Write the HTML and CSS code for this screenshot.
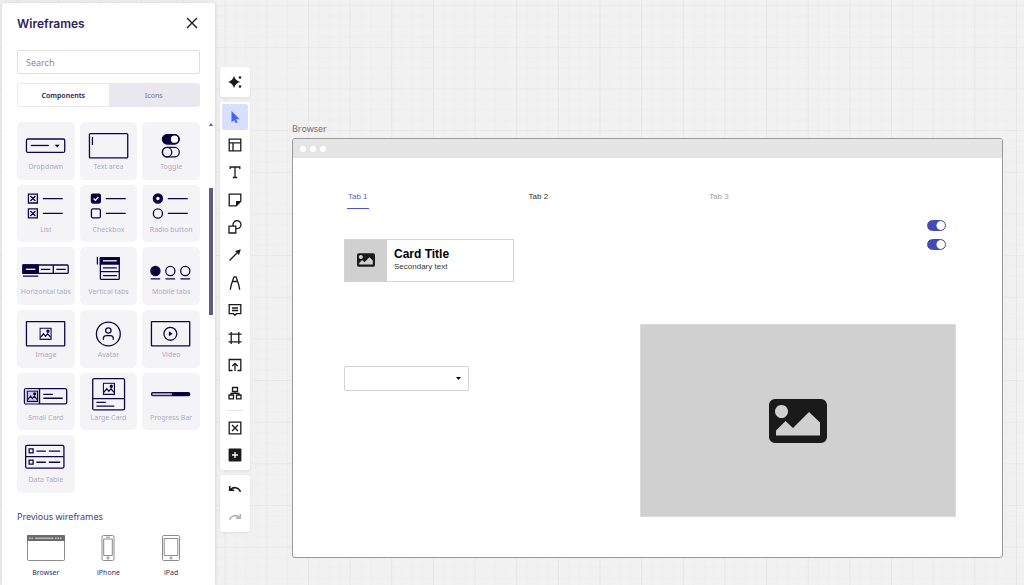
FILE: index.html
```html
<!DOCTYPE html>
<html lang="en">
<head>
<meta charset="utf-8">
<title>Wireframes</title>
<link rel="stylesheet" href="styles.css">
</head>
<body class="board">
<svg class="grid" aria-hidden="true">
  <defs>
    <pattern id="cell" x="16.4" y="5.2" width="41.65" height="41.65" patternUnits="userSpaceOnUse">
      <path class="grid-minor" d="M10.9 0v42M21.3 0v42M31.7 0v42M0 10.9h42M0 21.3h42M0 31.7h42"/>
      <path class="grid-major" d="M.5 0v42M0 .5h42"/>
    </pattern>
    <symbol id="photo" viewBox="0 0 58 44">
      <path fill-rule="evenodd" d="M6 0h46a6 6 0 0 1 6 6v32a6 6 0 0 1-6 6H6a6 6 0 0 1-6-6V6a6 6 0 0 1 6-6ZM12.500 6a6.500 6.500 0 1 0 .01 0ZM7 36.500h44V23.500L40 13 24 29l-7.500-7L7 31.500Z"/>
    </symbol>
    <symbol id="pic" viewBox="0 0 12 12">
      <rect x=".6" y=".6" width="10.800" height="10.800" fill="none" stroke="currentColor" stroke-width="1.200"/>
      <path d="M1 9.500 4 6l2 2.500L8 6l3 3.500" fill="none" stroke="currentColor" stroke-width="1.200"/>
      <circle cx="8.300" cy="3.500" r="1" fill="currentColor"/>
    </symbol>
  </defs>
  <rect width="100%" height="100%" fill="url(#cell)"/>
</svg>

<aside class="panel">
  <header class="panel-head">
    <h1 class="panel-title">Wireframes</h1>
    <button class="close" aria-label="Close"><svg viewBox="0 0 12 12"><path d="M1 1l10 10M11 1 1 11"/></svg></button>
  </header>
  <input class="search" type="text" placeholder="Search" aria-label="Search">
  <div class="switch">
    <button class="switch-item switch-on">Components</button>
    <button class="switch-item">Icons</button>
  </div>
  <div class="library">
    <div class="library-body">
      <div class="tiles">
        <button class="tile"><svg viewBox="0 0 58 40"><rect x="9.500" y="17" width="38.500" height="13.500" rx="1.500"/><path d="M14 23.500h18"/><path class="solid" d="M38 22.700h5l-2.500 2.800Z"/></svg><span>Dropdown</span></button>
        <button class="tile"><svg viewBox="0 0 58 40"><rect x="9.500" y="11.500" width="38.500" height="24.500" rx="1"/><path d="M12.500 15v8"/></svg><span>Text area</span></button>
        <button class="tile"><svg viewBox="0 0 58 40"><rect class="fill" x="20.500" y="12.500" width="17" height="9.500" rx="4.750"/><circle class="paper" cx="32.700" cy="17.200" r="4.300"/><rect x="20.500" y="25.500" width="17" height="9.500" rx="4.750"/><circle cx="25.200" cy="30.200" r="4.700"/></svg><span>Toggle</span></button>

        <button class="tile"><svg viewBox="0 0 58 40"><path d="M11.500 9h9v9h-9ZM13.500 11l5 5M18.500 11l-5 5M11.500 24h9v9h-9ZM13.500 26l5 5M18.500 26l-5 5M26 13.500h20M26 28.500h20"/></svg><span>List</span></button>
        <button class="tile"><svg viewBox="0 0 58 40"><rect class="fill" x="11.500" y="9" width="9" height="9" rx="1.500"/><path class="light" d="M13.700 13.500l1.800 1.800 3-3.300"/><rect x="11.500" y="24" width="9" height="9" rx="1.500"/><path d="M26 13.500h20M26 28.500h20"/></svg><span>Checkbox</span></button>
        <button class="tile"><svg viewBox="0 0 58 40"><circle class="fill" cx="16" cy="13.500" r="4.600"/><circle cx="16" cy="13.500" r="1.700" fill="#fff" stroke="none"/><circle cx="16" cy="28.500" r="4.600"/><path d="M26 13.500h20M26 28.500h20"/></svg><span>Radio button</span></button>

        <button class="tile"><svg viewBox="0 0 58 40"><rect x="6" y="18" width="45.500" height="8.500" rx="1"/><path class="fill" d="M6 18h15.500v8.500H6Z"/><path d="M36.500 18v8.500M24 22.300h9.500M39.500 22.300h9.500M6 29.200h15.500"/><path class="light" d="M9 22.300h9.500"/></svg><span>Horizontal tabs</span></button>
        <button class="tile"><svg viewBox="0 0 58 40"><rect x="20.500" y="10.500" width="19" height="22" rx="1"/><path class="fill" d="M20.500 10.500h19V17h-19Z"/><path d="M20.500 24.700h19M23 20.900h14M23 28.600h14M17.500 10v7.500"/><path class="light" d="M23 13.800h14"/></svg><span>Vertical tabs</span></button>
        <button class="tile"><svg viewBox="0 0 58 40"><circle class="fill" cx="13.500" cy="24" r="4.600"/><circle cx="28.500" cy="24" r="4.600"/><circle cx="43.500" cy="24" r="4.600"/><path d="M8.700 32h9.600M23.700 32h9.600M38.700 32h9.600"/></svg><span>Mobile tabs</span></button>

        <button class="tile"><svg viewBox="0 0 58 40"><rect x="9.500" y="11.500" width="38.500" height="24.500" rx=".5"/><use href="#pic" x="22.500" y="17.500" width="12.500" height="12.500"/></svg><span>Image</span></button>
        <button class="tile"><svg viewBox="0 0 58 40"><circle cx="28.500" cy="24" r="12"/><circle cx="28.500" cy="20.500" r="2.700"/><path d="M23.500 29.800v-1.200a3 3 0 0 1 3-3h4a3 3 0 0 1 3 3v1.200"/></svg><span>Avatar</span></button>
        <button class="tile"><svg viewBox="0 0 58 40"><rect x="9.500" y="11.500" width="38.500" height="24.500" rx=".5"/><circle cx="28.500" cy="23.800" r="6.500"/><path class="solid" d="M27 21.300v5l3.800-2.500Z"/></svg><span>Video</span></button>

        <button class="tile"><svg viewBox="0 0 58 40"><rect x="7.500" y="15.500" width="42.500" height="15.500" rx="1.500"/><path class="tint" d="M8 16h14.500v14.500H8Z"/><path d="M22.700 15.500V31M26.500 21.300H36M26.500 25.300h19.500"/><use href="#pic" x="9.800" y="17.500" width="11.500" height="11.500"/></svg><span>Small Card</span></button>
        <button class="tile"><svg viewBox="0 0 58 40"><rect x="12.800" y="5.500" width="32" height="31.500" rx="1.500"/><path d="M12.800 25.700h32M16.500 29.500h9.500M16.500 33.300h18"/><use href="#pic" x="22.800" y="9.500" width="12.500" height="12.500"/></svg><span>Large Card</span></button>
        <button class="tile"><svg viewBox="0 0 58 40"><rect class="fill" x="9.500" y="19.700" width="38.500" height="3" rx="1.500"/><path d="M10.500 21.200H30" stroke="#b9b5cb" stroke-width="2"/></svg><span>Progress Bar</span></button>

        <button class="tile"><svg viewBox="0 0 58 40"><rect x="8.700" y="10.300" width="38.500" height="23" rx="1.500"/><path d="M8.700 21.700h38.500M12.200 13.900h4v4h-4ZM12.200 25.200h4v4h-4ZM19.500 16h9.500M32 16h11.500M19.500 27.300H29M32 27.300h11.500"/></svg><span>Data Table</span></button>
      </div>
      <h2 class="section-title">Previous wireframes</h2>
      <div class="devices">
        <button class="device"><svg viewBox="0 0 40 28"><rect x="1.500" y="1.500" width="37" height="25" rx="1"/><path class="device-bar" d="M1.500 1.500h37v5h-37Z"/><path stroke="#fff" stroke-dasharray="1.500 1" d="M3 4.200h4.500M29 4.200h7.500"/><path stroke="#ddd" d="M9 4.200h18.500"/></svg><span>Browser</span></button>
        <button class="device"><svg viewBox="0 0 40 28"><rect x="14" y="1.500" width="12" height="25" rx="1.500"/><path d="M15.700 5h8.600v16.500h-8.600ZM18 3.200h4"/><circle cx="20" cy="24" r="1.100"/></svg><span>iPhone</span></button>
        <button class="device"><svg viewBox="0 0 40 28"><rect x="11.500" y="1.500" width="17" height="25" rx="1"/><path d="M13.200 4.500h13.600v17H13.200Z"/><circle cx="20" cy="24" r="1.100"/></svg><span>iPad</span></button>
      </div>
    </div>
    <div class="scroll"><svg class="scroll-up" viewBox="0 0 4 3"><path d="M2 0l2 3H0Z"/></svg><div class="scroll-thumb"></div></div>
  </div>
</aside>

<nav class="rail" aria-label="Tools">
  <div class="dock">
    <button class="tool" aria-label="Assist"><svg viewBox="0 0 14 14"><path class="ink" d="M6 .8Q7.200 5.800 12.200 7 7.200 8.200 6 13.200 4.800 8.200-.2 7 4.800 5.800 6 .8Z"/><circle class="ink" cx="12" cy="2.500" r="1.300"/><circle class="ink" cx="12" cy="11.500" r="1.300"/></svg></button>
  </div>
  <div class="dock dock-main">
    <div class="tools">
      <button class="tool tool-on" aria-label="Select"><svg viewBox="0 0 14 14"><path d="M3.500 1v11.300l2.700-2.100 1.600 3 1.800-.9-1.500-3h3.500Z" fill="#4262ff" stroke="none"/></svg></button>
      <button class="tool" aria-label="Templates"><svg viewBox="0 0 14 14"><path d="M1.200 1.200h11.600v11.600H1.200ZM1.200 4.800h11.600M5 4.800v8"/></svg></button>
      <button class="tool" aria-label="Text"><svg viewBox="0 0 14 14"><path d="M2.200 4V2h9.600v2M7 2v10.500M4.800 12.500h4.400"/></svg></button>
      <button class="tool" aria-label="Sticky note"><svg viewBox="0 0 14 14"><path d="M1.200 1.200h11.600v7l-4.500 4.600H1.200Z"/><path class="ink" d="M8 8h5l-5 5Z"/></svg></button>
      <button class="tool" aria-label="Shapes"><svg viewBox="0 0 14 14"><path d="M1 6.200h6.800V13H1ZM5.300 6.200a4 4 0 1 1 2.500 2.300"/></svg></button>
      <button class="tool" aria-label="Line"><svg viewBox="0 0 14 14"><path d="M1.500 12.500 9 5"/><path class="ink" d="M12.800 1.200 11 7 7 3Z"/></svg></button>
      <button class="tool" aria-label="Pen"><svg viewBox="0 0 14 14"><path d="M2.300 13.800C2.800 8.500 4.500 5 6 .8h2c1.500 4.200 3.200 7.700 3.700 13M4.700 5.500h4.600"/></svg></button>
      <button class="tool" aria-label="Comment"><svg viewBox="0 0 14 14"><path d="M1.200 1.700h11.600v9H8.500L7 12.300l-1.500-1.600H1.200ZM4 5h6M4 7.500h6"/></svg></button>
      <button class="tool" aria-label="Frame"><svg viewBox="0 0 14 14"><path d="M3.200 1v12M10.800 1v12M.5 3.200h13M.5 10.800h13"/></svg></button>
      <button class="tool" aria-label="Upload"><svg viewBox="0 0 14 14"><path d="M4.500 12.500H1.200V1.500h11.600v11H9.500M7 13V5.500M4.300 8 7 5.300 9.700 8"/></svg></button>
      <button class="tool" aria-label="Diagram"><svg viewBox="0 0 14 14"><path d="M4.500 1.500h5v4h-5ZM7 5.500v2M3 9V7.400h8V9M1 9h4.500v3.800H1ZM8.500 9H13v3.800H8.500Z"/></svg></button>
    </div>
    <hr class="rule">
    <button class="tool" aria-label="Wireframes"><svg viewBox="0 0 14 14"><path d="M1.200 1.200h11.600v11.600H1.200ZM4 4l6 6M10 4l-6 6"/></svg></button>
    <button class="tool" aria-label="More"><svg viewBox="0 0 14 14"><rect class="ink" x=".6" y=".6" width="12.800" height="12.800" rx="1"/><path stroke="#fff" d="M7 4v6M4 7h6"/></svg></button>
  </div>
  <div class="dock dock-history">
    <button class="tool" aria-label="Undo"><svg viewBox="0 0 14 14"><path stroke-width="1.600" d="M1.700 4v4.300h4.500M2.500 7.800C5 4.700 10.500 4.700 12.500 9.800"/></svg></button>
    <button class="tool tool-off" aria-label="Redo" disabled><svg viewBox="0 0 14 14"><path stroke-width="1.600" d="M12.300 4v4.300H7.800M11.500 7.800C9 4.700 3.500 4.700 1.500 9.800"/></svg></button>
  </div>
</nav>

<main class="canvas">
  <h2 class="frame-name">Browser</h2>
  <section class="frame">
    <div class="frame-bar"><i></i><i></i><i></i></div>
    <div class="page">
      <div class="tabs">
        <button class="tab tab-on">Tab 1</button>
        <button class="tab">Tab 2</button>
        <button class="tab tab-off">Tab 3</button>
      </div>
      <div class="row row-top">
        <article class="card">
          <div class="card-media"><svg class="card-photo"><use href="#photo"/></svg></div>
          <div class="card-text">
            <h3 class="card-title">Card Title</h3>
            <p class="card-sub">Secondary text</p>
          </div>
        </article>
        <div class="toggles">
          <input class="toggle" type="checkbox" role="switch" aria-label="First option" checked>
          <input class="toggle" type="checkbox" role="switch" aria-label="Second option" checked>
        </div>
      </div>
      <div class="row row-bottom">
        <div class="picker">
          <select class="picker-box" aria-label="Choice"><option></option></select>
          <svg class="picker-arrow" viewBox="0 0 5 3"><path d="M0 0h5L2.500 3Z"/></svg>
        </div>
        <div class="image"><svg class="image-photo"><use href="#photo"/></svg></div>
      </div>
    </div>
  </section>
</main>
</body>
</html>
```

FILE: styles.css
```css
* { box-sizing: border-box; }

.board {
  display: flex;
  min-height: 100vh;
  margin: 0;
  background: #f1f1f1;
  font-family: "Noto Sans", "Open Sans", sans-serif;
  color: #2b2459;
  overflow: hidden;
}

button {
  margin: 0;
  padding: 0;
  border: 0;
  background: none;
  color: inherit;
  font: inherit;
}

h1, h2, h3, p { margin: 0; font-weight: 400; }

.grid {
  position: absolute;
  inset: 0;
  width: 100%;
  height: 100%;
  z-index: -1;
}
.grid-major { stroke: #e7e7e7; fill: none; }
.grid-minor { stroke: #eeeeee; fill: none; }

/* Library panel */
.panel {
  flex: none;
  width: 213px;
  margin: 3px 0 0 2px;
  padding: 10px 0 0 15px;
  background: #fff;
  border-radius: 3px 3px 0 0;
  box-shadow: 0 0 5px rgba(5, 0, 56, 0.12);
}
.panel-head {
  display: flex;
  align-items: center;
  justify-content: space-between;
  height: 20px;
  padding-right: 17px;
}
.panel-title {
  font-family: Inter, sans-serif;
  font-size: 12px;
  font-weight: 600;
}
.close { display: flex; }
.close svg {
  width: 12px;
  height: 12px;
  stroke: #1a1a1a;
  stroke-width: 1.4;
}
.search {
  display: block;
  width: 183px;
  height: 24px;
  margin-top: 17px;
  padding: 0 8px;
  border: 1px solid #dfdee5;
  border-radius: 2px;
  font: 9px "Noto Sans", sans-serif;
  color: #2b2459;
}
.search::placeholder { color: #8a87a3; opacity: 1; }
.switch {
  display: flex;
  width: 183px;
  height: 24px;
  margin-top: 9px;
  padding: 1px;
  background: #e9e8ee;
  border-radius: 3px;
}
.switch-item {
  flex: 1;
  border-radius: 2px;
  font-size: 7px;
  font-weight: 500;
  color: #85829f;
}
.switch-on { background: #fff; color: #1c1450; font-weight: 600; }

.library { display: flex; margin-top: 15px; }
.library-body { width: 183px; }
.tiles {
  display: grid;
  grid-template-columns: repeat(3, 1fr);
  gap: 5px;
}
.tile {
  display: flex;
  flex-direction: column;
  align-items: center;
  aspect-ratio: 1;
  min-width: 0;
  background: #f4f4f7;
  border-radius: 5px;
  font-size: 7px;
  line-height: 10px;
  color: #aeabc2;
  white-space: nowrap;
}
.tile svg {
  width: 100%;
  height: 40px;
  color: #0e0548;
  fill: none;
  stroke: currentColor;
  stroke-width: 1.3;
}
.tile .fill { fill: #050038; }
.tile .solid { fill: #050038; stroke: none; }
.tile .paper { fill: #fff; }
.tile .light { stroke: #fff; }
.tile .tint { fill: #cdcbdc; stroke: none; }

.section-title {
  margin-top: 17px;
  font-size: 9px;
  line-height: 14px;
  color: #453e70;
}
.devices {
  display: grid;
  grid-template-columns: repeat(3, 1fr);
  gap: 5px;
  margin-top: 10px;
  color: #352e63;
}
.device {
  display: flex;
  flex-direction: column;
  align-items: center;
  gap: 6px;
  font-size: 7px;
  line-height: 10px;
}
.device svg {
  width: 40px;
  height: 28px;
  fill: none;
  stroke: #8b8b8b;
}
.device .device-bar { fill: #6a6a6a; stroke: #6a6a6a; }

.scroll {
  display: flex;
  flex-direction: column;
  width: 4px;
  margin-left: 9px;
}
.scroll-up { width: 4px; height: 3px; margin-top: 1px; fill: #605b80; }
.scroll-thumb { height: 127px; margin-top: 62px; background: #605b80; }

/* Tool rail */
.rail {
  display: flex;
  flex: none;
  flex-direction: column;
  gap: 5px;
  width: 30px;
  margin: 67px 0 0 5px;
}
.dock {
  display: flex;
  flex-direction: column;
  align-items: center;
  gap: 2px;
  padding: 2px;
  background: #fff;
  border-radius: 3px;
  box-shadow: 0 1px 3px rgba(5, 0, 56, 0.08);
}
.tools {
  display: flex;
  flex-direction: column;
  justify-content: space-between;
  height: 302px;
}
.tool {
  display: flex;
  align-items: center;
  justify-content: center;
  width: 26px;
  height: 26px;
  border-radius: 2px;
}
.tool-on { background: #d9dfff; }
.tool svg {
  width: 14px;
  height: 14px;
  fill: none;
  stroke: #1a1a1a;
  stroke-width: 1.3;
}
.tool .ink { fill: #1a1a1a; stroke: none; }
.tool-off svg { stroke: #aeb2bf; }
.dock-main { gap: 1px; }
.dock-history { padding: 1px 2px 2px; }
.rule {
  width: 16px;
  height: 1px;
  margin: 3px 0;
  border: 0;
  background: #e6e6e9;
}

/* Board content */
.canvas {
  flex: 1;
  min-width: 0;
  padding: 122px 21px 0 42px;
}
.frame-name { font-size: 9px; line-height: 14px; color: #777; }
.frame {
  margin-top: 2px;
  border: 1px solid #999;
  border-radius: 3px;
  background: #fff;
  font-family: "Liberation Sans", Arial, sans-serif;
  overflow: hidden;
}
.frame-bar {
  display: flex;
  align-items: center;
  gap: 4px;
  height: 19px;
  padding-left: 7px;
  background: #e5e5e5;
}
.frame-bar i { width: 6px; height: 6px; border-radius: 50%; background: #fff; }
.page { padding: 33px 46px 40px 51px; }
.tabs {
  display: grid;
  grid-template-columns: repeat(3, 1fr);
  justify-items: start;
  width: 89%;
  padding-left: 3px;
  font-size: 8px;
  line-height: 11px;
  color: #333;
}
.tab { padding: 0 1px 6px; border-bottom: 1px solid transparent; }
.tab-on { color: #5a62cf; border-color: #4a55cc; }
.tab-off { color: #a3a3a3; }
.row { display: flex; align-items: flex-start; justify-content: space-between; }
.row-top { margin-top: 11px; }
.row-bottom { margin-top: 42px; }

.card {
  display: flex;
  width: 170px;
  height: 43px;
  margin-top: 19px;
  border: 1px solid #d3d3d3;
}
.card-media {
  display: flex;
  align-items: center;
  justify-content: center;
  width: 42px;
  padding-bottom: 2px;
  background: #d0d0d0;
}
.card-photo { width: 18px; height: 14px; fill: #1a1a1a; }
.card-text { padding: 7px; }
.card-title { font-size: 12px; font-weight: 700; line-height: 15px; color: #000; }
.card-sub { font-size: 8px; line-height: 10px; color: #333; }

.toggles { display: flex; flex-direction: column; gap: 8px; margin-right: 10px; }
.toggle {
  appearance: none;
  width: 19px;
  height: 11px;
  margin: 0;
  border: 1px solid #414bb2;
  border-radius: 6px;
  background: radial-gradient(circle at 13px 50%, #fff 4px, #414bb2 5px);
}

.picker { position: relative; width: 125px; margin-top: 42px; }
.picker-box {
  display: block;
  appearance: none;
  width: 100%;
  height: 25px;
  border: 1px solid #d3d3d3;
  border-radius: 2px;
  background: #fff;
}
.picker-arrow {
  position: absolute;
  top: 11px;
  right: 8px;
  width: 5px;
  height: 3px;
  fill: #050038;
  pointer-events: none;
}
.image {
  display: flex;
  align-items: center;
  justify-content: center;
  width: 316px;
  height: 193px;
  border: 1px solid #dcdcdc;
  background: #d0d0d0;
}
.image-photo { width: 58px; height: 44px; fill: #1a1a1a; }
```
